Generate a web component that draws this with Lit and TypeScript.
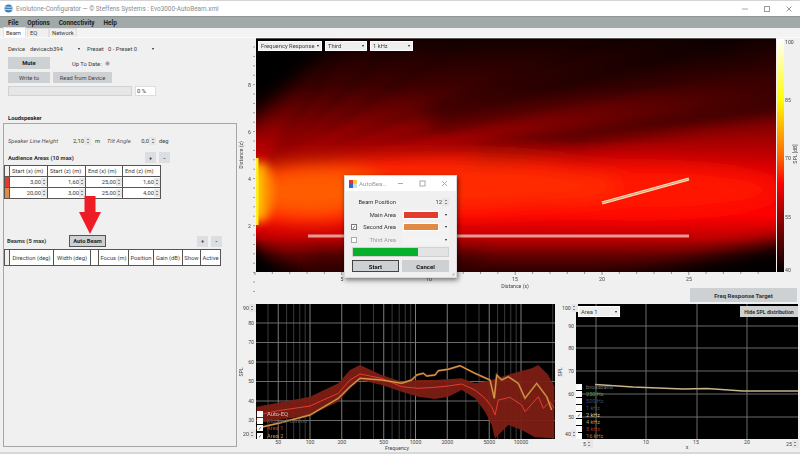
import { LitElement, html, css, svg } from "lit";
import { customElement } from "lit/decorators.js";

type P = [number, number];
const fp = (a: P[]) => a.map(([x, y]) => `${(235 + x / 3).toFixed(1)},${(300 + y / 3).toFixed(1)}`).join(" ");
const redTop: P[] = [[65,320],[225,290],[310,250],[345,210],[375,195],[440,225],[500,245],[550,240],[600,240],[680,235],[720,250],[770,240],[800,230],[850,215],[890,205],[910,195],[940,225],[958,260]];
const redBot: P[] = [[958,415],[900,412],[860,390],[820,375],[780,415],[770,375],[750,335],[720,295],[680,270],[640,290],[600,297],[550,290],[500,275],[440,255],[375,240],[345,265],[310,305],[225,345],[65,370]];
const redMid: P[] = [[65,345],[130,332],[225,318],[310,280],[345,240],[375,222],[440,235],[500,260],[550,265],[600,262],[640,258],[680,252],[720,270],[750,295],[770,320],[780,345],[790,300],[825,292],[860,315],[870,335],[910,290],[925,325],[945,305],[958,325]];
const orMid: P[] = [[65,385],[130,370],[225,345],[310,295],[345,260],[375,235],[440,240],[500,250],[530,240],[545,225],[565,220],[575,228],[600,225],[610,212],[640,208],[675,197],[720,220],[765,240],[778,295],[785,225],[800,240],[820,230],[850,250],[870,295],[905,250],[935,290],[950,330]];
const freqX = (f: number) => 310 + 105.5 * Math.log10(f / 100);
const minor = [40,60,70,80,90,300,400,600,700,800,900,3000,4000,6000,7000,8000,9000,20000];
const major = [50,100,200,500,1000,2000,5000,10000];

@customElement("app-root")
export class AppRoot extends LitElement {
  static styles = css`
    :host { display: block; position: relative; width: 800px; height: 454px; overflow: hidden; background: #f0f0f0; font-family: Roboto, "Liberation Sans", sans-serif; font-size: 5.8px; color: #3a3a3a; }
    * { box-sizing: border-box; }
    svg { display: block; overflow: visible; }
    svg text { font-family: Roboto, "Liberation Sans", sans-serif; font-size: 5.2px; fill: #444; }
    .title { height: 16px; background: #fff; border-top: 1px solid #d4d4d4; display: flex; align-items: center; padding-left: 4px; gap: 3px; color: #8b8b8b; font-size: 6.4px; }
    .winbtns { margin-left: auto; display: flex; gap: 14px; padding-right: 7px; }
    .menu { height: 12px; background: #a2a9a9; border-top: 1px solid #8f9696; display: flex; align-items: center; font-weight: 700; font-size: 6.4px; color: #222; padding-left: 8px; gap: 9px; }
    .tabs { height: 10px; background: #f3f3f3; display: flex; padding-left: 3px; align-items: flex-end; border-bottom: 1px solid #fafafa; }
    .tab { height: 9px; padding: 0 4px; display: flex; align-items: center; background: #efefef; border: 1px solid #e0e0e0; border-bottom: 0; }
    .tab.on { background: #fff; height: 10px; width: 23px; padding: 0 2px; }
    .tab.eq { width: 22px; margin-left: 1px; padding-left: 2px; }
    .tab.net { width: 28px; padding-left: 2px; }
    .content { display: flex; height: 414px; }
    .left { width: 240px; flex: none; position: relative; }
    .row { display: flex; align-items: center; padding-left: 8px; }
    .device { margin-top: 6px; height: 10px; }
    .sel { background: #f0f0f0; height: 10px; display: flex; align-items: center; justify-content: space-between; padding: 0 2px; white-space: nowrap; }
    .sel.white { background: #eee; border: 1px solid #fff; }
    .arr { width: 0; height: 0; border: 1.5px solid transparent; border-top: 2px solid #222; border-bottom: 0; flex: none; }
    .btn { background: #cdd1d4; display: flex; align-items: center; justify-content: center; white-space: nowrap; color: #444; }
    .b { font-weight: 700; }
    .mute { margin-top: 3px; height: 12px; }
    .mute .btn { width: 42px; height: 12px; color: #222; }
    .uptodate { margin-left: 22px; width: 33px; white-space: nowrap; padding-top: 1px; }
    .led { width: 5px; height: 5px; border-radius: 50%; background: #999; border: 1px solid #ccc; }
    .write { margin-top: 3px; height: 11px; gap: 3px; }
    .write .btn { height: 11px; }
    .prog { margin-top: 3px; height: 10px; gap: 3px; }
    .bar { width: 124px; height: 10px; background: #e6e6e6; border: 1px solid #d2d2d2; }
    .pct { width: 21px; height: 10px; background: #fff; border: 1px solid #ddd; padding-left: 1px; display: flex; align-items: center; }
    .ls { margin-top: 17px; height: 10px; font-weight: 700; color: #222; }
    .box { margin-left: 3px; width: 234px; height: 324px; border: 1px solid #a6a6a6; position: relative; padding-left: 0; }
    .line { margin-top: 12px; height: 10px; padding-left: 4px; }
    .i { font-style: italic; color: #555; white-space: nowrap; }
    .num { text-align: right; white-space: nowrap; }
    .spin { width: 7px; height: 8px; background: #e6e6e6; display: flex; flex-direction: column; align-items: center; justify-content: space-evenly; flex: none; }
    .spin i { width: 0; height: 0; border: 1.2px solid transparent; border-top: 0; border-bottom: 1.5px solid #222; }
    .spin i + i { border-bottom: 0; border-top: 1.5px solid #222; }
    .head { display: flex; align-items: center; height: 11px; margin-top: 6px; padding-left: 4px; width: 166px; justify-content: space-between; font-weight: 700; color: #333; white-space: nowrap; }
    .pm { display: flex; gap: 3px; }
    .pm span { height: 11px; background: #dcdfe1; display: flex; align-items: center; justify-content: center; width: 11px; }
    .tbl { display: grid; border-top: 1px solid #555; border-left: 1px solid #555; margin-top: 2px; width: max-content; }
    .tbl > div { border-right: 1px solid #555; border-bottom: 1px solid #555; background: #fff; display: flex; align-items: center; white-space: nowrap; overflow: hidden; }
    .tbl > .rh { background: #f0f0f0; }
    .areas { grid-template-columns: 5px 38px 38px 37px 38px; grid-auto-rows: 11px; }
    .hc { padding-left: 2px; }
    .vc { justify-content: flex-end; gap: 0; }
    .vc .spin { width: 6px; margin-left: 0; }
    .beamhead { margin-top: 36px; height: 12px; display: flex; align-items: center; padding-left: 3px; width: 218px; font-weight: 700; }
    .beamhead .tt { width: 62px; white-space: nowrap; }
    .beamhead .auto { width: 37px; height: 12px; border: 1px solid #555; color: #222; }
    .beamhead .pm { margin-left: auto; }
    .beams { grid-template-columns: 5px 44px 37px 8px 30px 25px 29px 18px 20px; grid-auto-rows: 16px; }
    .beams > div { justify-content: center; }
    .arrow { position: absolute; left: 75px; top: 72px; }
    .right { width: 560px; flex: none; padding-top: 1px; }
    .chart { position: relative; }
    .ovl { position: absolute; }
    .drops { left: 18px; top: 2px; display: flex; gap: 3px; }
    .targetrow { height: 14px; display: flex; justify-content: flex-end; padding-right: 3px; }
    .target { width: 107px; height: 14px; font-weight: 700; color: #333; font-size: 6px; }
    .bottom { display: flex; margin-top: 1px; }
    .sp { display: flex; align-items: center; gap: 0; font-size: 5.2px; }
    .legend { display: grid; grid-template-columns: 6px auto; column-gap: 4px; align-items: center; white-space: nowrap; }
    .legend .cb { width: 6px; height: 6px; background: #fff; color: #333; font-size: 5px; line-height: 6px; text-align: center; overflow: hidden; }
    .hide { right: 2px; top: 3px; width: 58px; height: 11px; font-weight: 700; font-size: 5.2px; color: #333; }
    .strip { height: 2px; background: #d8d8d8; }
    .dlg { position: absolute; left: 344px; top: 175px; width: 113px; height: 103px; background: #f0f0f0; border: 1px solid #d9d9d9; box-shadow: 1px 2px 5px rgba(0,0,0,.55); display: flex; flex-direction: column; }
    .dt { height: 15px; background: #fff; display: flex; align-items: center; padding-left: 4px; gap: 2px; color: #9a9a9a; font-size: 6.2px; flex: none; }
    .dt .wb { margin-left: auto; display: flex; gap: 15px; padding-right: 8px; }
    .dr { display: grid; grid-template-columns: 10px 35px 6px 47px; align-items: center; padding-left: 6px; height: 12.500px; }
    .dr .lab { text-align: right; white-space: nowrap; color: #333; display: flex; justify-content: flex-end; }
    .dr .lab.dim { color: #999; }
    .dck { width: 6px; height: 6px; background: #fff; border: 1px solid #777; font-size: 5px; line-height: 4px; text-align: center; overflow: hidden; }
    .dck.dim { border-color: #aaa; }
    .csel { height: 11px; display: flex; align-items: center; justify-content: space-between; padding: 0 2px 0 1px; background: #f3f3f3; }
    .swatch { width: 36px; height: 8px; border: 1px solid #fff; }
    .dp { margin: 1px 0 0 7px; width: 97px; height: 10px; background: #e3e3e3; border: 1px solid #d2d2d2; }
    .dp div { width: 68%; height: 100%; background: #06b02a; }
    .dbtns { display: flex; gap: 3px; margin: 3px 0 0 7px; }
    .dbtns .btn { height: 12px; font-weight: 700; color: #111; font-size: 6px; }
    .dbtns .start { width: 47px; border: 1px solid #444; }
    .dbtns .cancel { width: 47px; }
    .grip { position: absolute; right: 1px; bottom: 1px; }
  `;

  spin() { return html`<span class="spin"><i></i><i></i></span>`; }
  sp(n: string) { return html`<div class="sp"><span>${n}</span>${this.spin()}</div>`; }
  dd(t: string, w: number) { return html`<div class="sel white" style="width:${w}px"><span>${t}</span><span class="arr"></span></div>`; }

  heat() {
    const rays = [[470,39],[400,39],[350,39],[620,39],[760,60],[776,110]];
    return svg`<svg width="560" height="249" viewBox="240 39 560 249">
      <defs>
        <linearGradient id="base" x1="0" y1="0" x2="0" y2="1">
          <stop offset="0" stop-color="#140000"/><stop offset=".2" stop-color="#3e0000"/><stop offset=".32" stop-color="#700000"/>
          <stop offset=".47" stop-color="#b40000"/><stop offset=".6" stop-color="#ee0000"/><stop offset=".75" stop-color="#ff0000"/>
          <stop offset=".85" stop-color="#c40000"/><stop offset=".93" stop-color="#640000"/><stop offset="1" stop-color="#2a0000"/>
        </linearGradient>
        <linearGradient id="cb" x1="0" y1="0" x2="0" y2="1">
          <stop offset="0" stop-color="#fff"/><stop offset=".26" stop-color="#ff0"/><stop offset=".5" stop-color="#ff6a00"/>
          <stop offset=".62" stop-color="#f00"/><stop offset=".76" stop-color="#900"/><stop offset="1" stop-color="#000"/>
        </linearGradient>
        <filter id="bl" x="-30%" y="-30%" width="160%" height="160%"><feGaussianBlur stdDeviation="10"/></filter>
        <filter id="bs" x="-30%" y="-30%" width="160%" height="160%"><feGaussianBlur stdDeviation="4"/></filter>
        <clipPath id="hc"><rect x="256" y="39" width="520" height="233"/></clipPath>
      </defs>
      <g clip-path="url(#hc)">
        <rect x="256" y="39" width="520" height="233" fill="url(#base)"/>
        <g filter="url(#bs)" opacity=".18">
          ${rays.map(([x, y]) => svg`<line x1="262" y1="170" x2=${x} y2=${y} stroke="#000" stroke-width="6"/>`)}
        </g>
        <g filter="url(#bl)">
          <polygon points="240,20 360,20 240,130" fill="#000"/>
          <line x1="430" y1="118" x2="740" y2="40" stroke="#000" stroke-width="15" opacity=".65"/>
          <line x1="470" y1="158" x2="790" y2="100" stroke="#000" stroke-width="11" opacity=".7"/>
          <ellipse cx="640" cy="190" rx="140" ry="24" fill="#ff1800"/>
          <ellipse cx="430" cy="185" rx="190" ry="27" fill="#ff2c00"/>
          <ellipse cx="310" cy="192" rx="70" ry="28" fill="#ff5c00"/>
          <polygon points="240,238 310,285 240,290" fill="#000"/>
          <polygon points="310,255 480,255 480,285 310,285" fill="#300" opacity=".75"/>
          <polygon points="600,285 790,285 790,240" fill="#000"/>
        </g>
        <g filter="url(#bs)">
          <ellipse cx="262" cy="192" rx="11" ry="30" fill="#ff9000"/>
          <ellipse cx="256" cy="192" rx="4" ry="30" fill="#ffe600"/>
          <polygon points="250,240 268,272 250,272" fill="#000"/>
        </g>
        <line x1="257" y1="158" x2="257" y2="225" stroke="#ffee20" stroke-width="3"/>
        <line x1="308" y1="236" x2="689" y2="236" stroke="#fff" stroke-width="3" opacity=".6"/>
        <line x1="308" y1="236" x2="689" y2="236" stroke="#ec9a90" stroke-width="1.2"/>
        <line x1="602" y1="203" x2="689" y2="179" stroke="#f9e3c8" stroke-width="3"/>
        <line x1="602" y1="203" x2="689" y2="179" stroke="#e8a060" stroke-width="1.2"/>
      </g>
      <rect x="777" y="39" width="7" height="233" fill="url(#cb)"/>
      <line x1="256" y1="38.5" x2="776" y2="38.5" stroke="#555" stroke-width="1"/>
      ${Array.from({ length: 27 }, (_, i) => svg`<line x1="255" y1=${47 + i * 9.4} x2="253" y2=${47 + i * 9.4} stroke="#666" stroke-width=".6"/>`)}
      ${Array.from({ length: 30 }, (_, i) => svg`<line x1=${255 + i * 17.35} y1="272" x2=${255 + i * 17.35} y2=${i % 5 ? 274 : 275} stroke="#555" stroke-width=".6"/>`)}
      ${[[8,87],[6,134],[4,181],[2,228]].map(([v, y]) => svg`<text x="248" y=${y}>${v}</text>`)}
      ${[[5,342],[10,429],[15,515],[20,602],[25,689]].map(([v, x]) => svg`<text x=${x} y="281" text-anchor="middle">${v}</text>`)}
      <text x="515" y="287.500" text-anchor="middle">Distance (x)</text>
      <text transform="translate(243,155) rotate(-90)" text-anchor="middle">Distance (z)</text>
      ${[[100,44],[85,102],[70,160],[55,219],[40,272]].map(([v, y]) => svg`<text x="785" y=${y}>${v}</text>`)}
      <text transform="translate(797,154) rotate(-90)" text-anchor="middle">SPL [dB]</text>
    </svg>`;
  }

  freq() {
    const hy = [323, 342.5, 362, 381.5, 401, 420.5];
    const lab = [[80,323],[70,342],[60,362],[50,381],[40,401],[30,420]];
    return svg`<svg width="318" height="148" viewBox="240 303 318 148">
      <clipPath id="fc"><rect x="256" y="304" width="299" height="135"/></clipPath>
      <rect x="256" y="304" width="299" height="135" fill="#000"/>
      <g clip-path="url(#fc)">
        ${minor.map((f) => svg`<line x1=${freqX(f)} x2=${freqX(f)} y1="304" y2="439" stroke="#555" stroke-width=".7"/>`)}
        ${major.map((f) => svg`<line x1=${freqX(f)} x2=${freqX(f)} y1="304" y2="439" stroke="#8a8a8a" stroke-width=".9"/>`)}
        ${hy.map((y) => svg`<line x1="256" x2="555" y1=${y} y2=${y} stroke="#777" stroke-width=".9"/>`)}
        <polygon points=${fp(redTop) + " " + fp(redBot)} fill="#7c1d14" opacity=".95"/>
        <polyline points=${fp(redMid)} fill="none" stroke="#e63c30" stroke-width="1"/>
        <polyline points=${fp(orMid)} fill="none" stroke="#9a6128" stroke-width="2"/>
        <polyline points=${fp(orMid)} fill="none" stroke="#e9a052" stroke-width=".9"/>
      </g>
      ${lab.map(([v, y]) => svg`<text x="254" y=${y + 2} text-anchor="end">${v}</text>`)}
      ${major.map((f) => svg`<text x=${freqX(f)} y="443.500" text-anchor="middle">${f}</text>`)}
      <text x="397" y="449.500" text-anchor="middle">Frequency</text>
      <text transform="translate(243,372) rotate(-90)" text-anchor="middle">SPL</text>
    </svg>`;
  }

  spl() {
    const pts: P[] = [[595,384.5],[603,385],[633,387],[683,389],[707,388.5],[743,391],[798,391]];
    const hy = [326, 348, 371, 394, 417];
    return svg`<svg width="242" height="148" viewBox="558 303 242 148">
      <rect x="576" y="304" width="222" height="135" fill="#000"/>
      ${[596, 646, 697, 747].map((x) => svg`<line x1=${x} x2=${x} y1="304" y2="439" stroke="#777" stroke-width=".9"/>`)}
      ${hy.map((y) => svg`<line x1="576" x2="798" y1=${y} y2=${y} stroke="#777" stroke-width=".9"/>`)}
      <polyline points=${pts.map((p) => p.join(",")).join(" ")} fill="none" stroke="#c9b48c" stroke-width="1.3"/>
      ${[[90,326],[80,348],[70,371],[60,394],[50,417]].map(([v, y]) => svg`<text x="574" y=${y + 2} text-anchor="end">${v}</text>`)}
      ${[[10,646],[15,696],[20,747]].map(([v, x]) => svg`<text x=${x} y="444" text-anchor="middle">${v}</text>`)}
      <text x="687" y="449" text-anchor="middle">x</text>
      <text transform="translate(562,372) rotate(-90)" text-anchor="middle">SPL</text>
    </svg>`;
  }

  legendRows(rows: [string, string, boolean][]) {
    return rows.map(([t, c, on]) => html`<span class="cb">${on ? "✓" : ""}</span><span style="color:${c}">${t}</span>`);
  }

  render() {
    const area = [["3,00","1,60","25,00","1,60","#e33b2e"],["20,00","3,00","25,00","4,00","#e08a45"]];
    return html`
      <div class="title">
        <svg width="9" height="9" viewBox="0 0 9 9"><circle cx="4.5" cy="4.5" r="4" fill="#3b7fb5"/><path d="M.5 3.2c2-1 4 1 8-.4M.5 5.6c2-1 4 1 8-.4" stroke="#d5e6f2" stroke-width=".9" fill="none"/></svg>
        <span>Evolutone-Configurator — © Steffens Systems : Evo3000-AutoBeam.xml</span>
        <div class="winbtns">
          <svg width="8" height="8" viewBox="0 0 8 8"><path d="M1 4h6" stroke="#aaa"/></svg>
          <svg width="8" height="8" viewBox="0 0 8 8"><rect x="1.5" y="1.5" width="5" height="5" fill="none" stroke="#999"/></svg>
          <svg width="8" height="8" viewBox="0 0 8 8"><path d="M1.500 1.500l5 5m0-5l-5 5" stroke="#999"/></svg>
        </div>
      </div>
      <div class="menu"><span>File</span><span>Options</span><span>Connectivity</span><span>Help</span></div>
      <div class="tabs"><div class="tab on">Beam</div><div class="tab eq">EQ</div><div class="tab net">Network</div></div>
      <div class="content">
        <div class="left">
          <div class="row device">
            <span style="width:20px">Device</span>
            <div class="sel" style="width:54px"><span>devicecb394</span><span class="arr"></span></div>
            <span style="margin-left:5px;width:19px">Preset</span>
            <div class="sel" style="width:50px"><span>0 - Preset 0</span><span class="arr"></span></div>
          </div>
          <div class="row mute"><div class="btn b">Mute</div><span class="uptodate">Up To Date:</span><span class="led"></span></div>
          <div class="row write"><div class="btn" style="width:42px">Write to</div><div class="btn" style="width:59px">Read from Device</div></div>
          <div class="row prog"><div class="bar"></div><div class="pct">0 %</div></div>
          <div class="row ls">Loudspeaker</div>
          <div class="box">
            <div class="row line">
              <span class="i" style="width:60px">Speaker Line Height</span>
              <span class="num" style="width:16px">2,10</span>${this.spin()}
              <span style="margin-left:4px;width:12px">m</span>
              <span class="i" style="width:30px">Tilt Angle</span>
              <span class="num" style="width:12px">0,0</span>${this.spin()}
              <span style="margin-left:3px">deg</span>
            </div>
            <div class="head"><span>Audience Areas (10 max)</span><div class="pm"><span>+</span><span>-</span></div></div>
            <div class="tbl areas">
              <div class="rh"></div>
              ${["Start (x) (m)","Start (z) (m)","End (x) (m)","End (z) (m)"].map((h) => html`<div class="hc">${h}</div>`)}
              ${area.map((r) => html`<div style="background:${r[4]}"></div>${r.slice(0, 4).map((v) => html`<div class="vc"><span>${v}</span>${this.spin()}</div>`)}`)}
            </div>
            <svg class="arrow" width="22" height="38" viewBox="0 0 22 38"><path d="M5.500 0h11v16h5.500L11 38 0 16h5.500z" fill="#ee1c25"/></svg>
            <div class="beamhead"><span class="tt">Beams (5 max)</span><div class="btn auto b">Auto Beam</div><div class="pm"><span>+</span><span>-</span></div></div>
            <div class="tbl beams">
              <div class="rh"></div>
              ${["Direction (deg)","Width (deg)","","Focus (m)","Position","Gain (dB)","Show","Active"].map((h) => html`<div>${h}</div>`)}
            </div>
          </div>
        </div>
        <div class="right">
          <div class="chart">
            ${this.heat()}
            <div class="ovl drops">${this.dd("Frequency Response", 64)}${this.dd("Third", 42)}${this.dd("1 kHz", 43)}</div>
          </div>
          <div class="targetrow"><div class="btn target">Freq Response Target</div></div>
          <div class="bottom">
            <div class="chart">
              ${this.freq()}
              <div class="ovl" style="left:3px;top:1px">${this.sp("90")}</div>
              <div class="ovl" style="left:3px;top:127px">${this.sp("20")}</div>
              <div class="ovl legend" style="left:17px;top:107px;grid-auto-rows:7.300px">
                ${this.legendRows([["Auto-EQ","#ccc",false],["Mouse Position","#5a5a5a",false],["Area 1","#d4392c",true],["Area 2","#d98a3d",true]])}
              </div>
            </div>
            <div class="chart">
              ${this.spl()}
              <div class="ovl" style="left:4px;top:1px">${this.sp("100")}</div>
              <div class="ovl" style="left:7px;top:127px">${this.sp("40")}</div>
              <div class="ovl" style="left:25px;top:137px">${this.sp("5")}</div>
              <div class="ovl" style="left:228px;top:137px">${this.sp("25")}</div>
              <div class="ovl sel white" style="left:20px;top:3px;width:42px;height:11px"><span>Area 1</span><span class="arr"></span></div>
              <div class="ovl btn hide">Hide SPL distribution</div>
              <div class="ovl legend" style="left:18px;top:80px;grid-auto-rows:7px;font-size:5.600px">
                ${this.legendRows([["broadband","#777",false],["250 Hz","#3fa650",false],["500 Hz","#2d4a78",false],["1 kHz","#35596a",false],["2 kHz","#d8c7a4",true],["4 kHz","#b59a58",false],["8 kHz","#a33232",false],["16 kHz","#b07a30",false]])}
              </div>
            </div>
          </div>
        </div>
      </div>
      <div class="strip"></div>
      <div class="dlg">
        <div class="dt">
          <svg width="8" height="8" viewBox="0 0 8 8"><rect width="4" height="4" fill="#d33"/><rect x="4" width="4" height="4" fill="#fc3"/><rect y="4" width="4" height="4" fill="#36c"/><rect x="4" y="4" width="4" height="4" fill="#cde"/></svg>
          <span>AutoBea...</span>
          <div class="wb">
            <svg width="7" height="7" viewBox="0 0 7 7"><path d="M1 3.500h5" stroke="#aaa"/></svg>
            <svg width="7" height="7" viewBox="0 0 7 7"><rect x="1" y="1" width="5" height="5" fill="none" stroke="#aaa"/></svg>
            <svg width="7" height="7" viewBox="0 0 7 7"><path d="M1 1l5 5m0-5l-5 5" stroke="#aaa"/></svg>
          </div>
        </div>
        <div class="dr" style="margin-top:5px"><span></span><span class="lab">Beam Position</span><span></span><div class="row" style="justify-content:flex-end;padding:0"><span>12</span>${this.spin()}</div></div>
        <div class="dr"><span></span><span class="lab">Main Area</span><span></span><div class="csel"><span class="swatch" style="background:#e33b2e"></span><span class="arr"></span></div></div>
        <div class="dr"><span class="dck">✓</span><span class="lab">Second Area</span><span></span><div class="csel"><span class="swatch" style="background:#e08a45"></span><span class="arr"></span></div></div>
        <div class="dr"><span class="dck dim"></span><span class="lab dim">Third Area</span><span></span><div class="csel"><span class="swatch" style="border-color:#f3f3f3"></span><span class="arr"></span></div></div>
        <div class="dp"><div></div></div>
        <div class="dbtns"><div class="btn start">Start</div><div class="btn cancel">Cancel</div></div>
        <svg class="grip" width="4" height="4" viewBox="0 0 4 4"><path d="M3.500.5v3h-3z" fill="#bbb"/></svg>
      </div>
    `;
  }
}
